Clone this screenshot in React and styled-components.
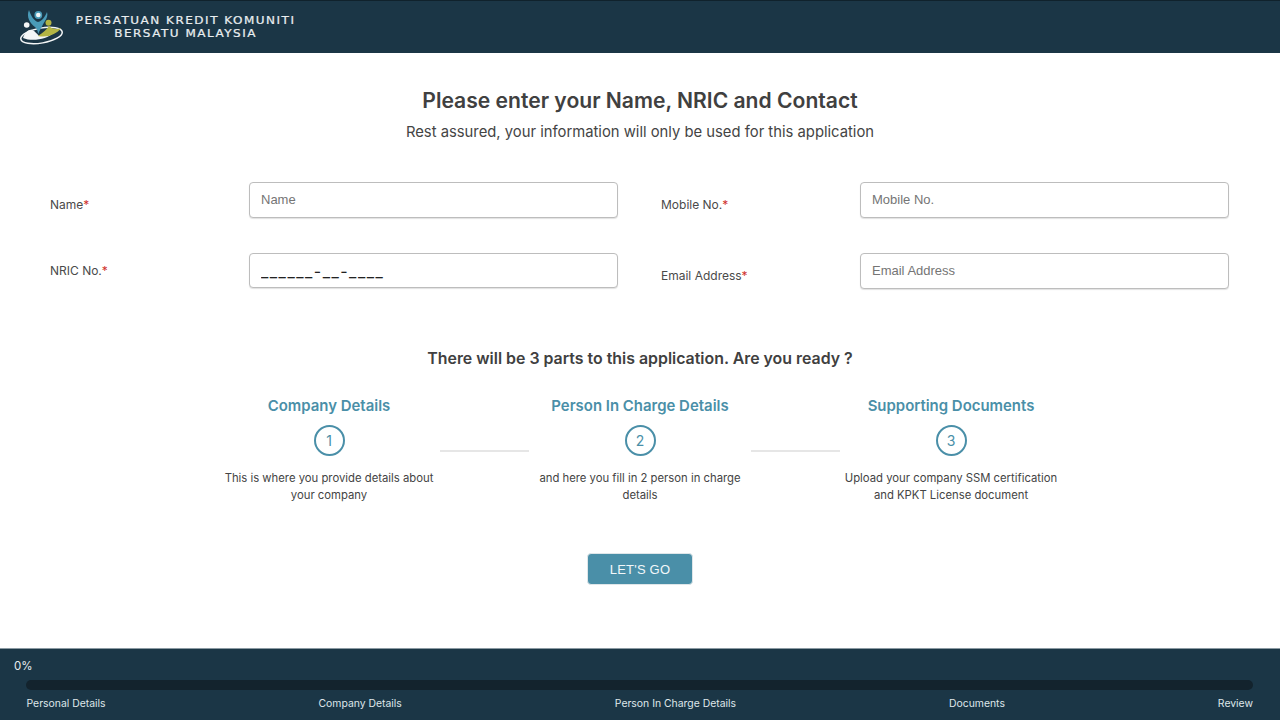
import React from "react";
import styled, { createGlobalStyle } from "styled-components";

const Global = createGlobalStyle`
  html, body { margin: 0; padding: 0; background: #fff; }
  * { box-sizing: border-box; }
`;
const Page = styled.div`
  width: 1280px; height: 720px; display: flex; flex-direction: column; overflow: hidden;
  font-family: Inter, "Noto Sans", sans-serif; color: #3f3f3f; background: #fff;
`;
const Header = styled.header`
  height: 53px; flex: none; background: #1b3646; border-top: 1px solid #10222c;
  display: flex; align-items: center; padding: 0 0 0 20px; gap: 12px;
`;
const Brand = styled.div`
  width: 220px; display: flex; justify-content: center; margin-top: -1px;
`;
const BrandText = styled.div`
  font-family: "DejaVu Sans", sans-serif; color: #e9eef0; font-size: 10px; line-height: 13px;
  text-align: center; letter-spacing: 1.25px; font-weight: 400; white-space: nowrap; flex: none;
  transform: scaleX(1.2); -webkit-text-stroke: 0.2px #e9eef0;
`;
const Main = styled.main`
  flex: 1; display: flex; flex-direction: column; align-items: center; padding-top: 35px;
`;
const Title = styled.h1`
  margin: 0; font-size: 21.1px; line-height: 26px; font-weight: 600; color: #404040;
`;
const Sub = styled.p`
  margin: 7px 0 0; font-size: 14.8px; line-height: 22px; font-weight: 400; color: #444;
`;
const FormGrid = styled.div`
  align-self: stretch; margin: 39px 51px 0 50px; display: grid; grid-template-columns: 568px 568px;
  column-gap: 43px; row-gap: 35px;
`;
const Field = styled.div`
  display: grid; grid-template-columns: 199px 1fr; align-items: start;
`;
const Label = styled.label`
  font-family: Inter, sans-serif; font-size: 12px; line-height: 16px; color: #4a4a4a;
  padding-top: ${p => p.$top}px;
  b { color: #d0312d; font-weight: 400; }
`;
const Input = styled.input`
  width: 100%; height: ${p => p.$h || 36}px; border: 1px solid #bdbdbd; border-radius: 4px; padding: 0 11px 1px;
  font-family: "Liberation Sans", sans-serif; font-size: 13px; color: #222; background: #fff;
  box-shadow: 0 1px 1px #e2e2e2; outline: none;
  &::placeholder { color: #757575; opacity: 1; }
`;
const MaskInput = styled(Input)`
  font-family: Inter, sans-serif; font-size: 16px; letter-spacing: 1.5px; padding-top: 1px; padding-bottom: 0;
`;
const Ready = styled.h2`
  margin: 59px 0 0; font-size: 15.9px; line-height: 22px; font-weight: 600; color: #404040;
`;
const Steps = styled.div`
  margin-top: 25px; display: grid; grid-template-columns: 222px 89px 222px 89px 222px; height: 113px;
`;
const Step = styled.div`
  display: flex; flex-direction: column; align-items: center; text-align: center;
`;
const StepTitle = styled.h3`
  margin: 0; font-size: 14.95px; line-height: 22px; font-weight: 600; color: #4a8fa8; white-space: nowrap;
`;
const Circle = styled.div`
  margin-top: 8px; width: 31px; height: 31px; border-radius: 50%; border: 2px solid #4a8fa8; color: #4a8fa8;
  display: flex; align-items: center; justify-content: center; font-size: 14px; line-height: 1;
`;
const StepText = styled.p`
  margin: 14px 0 0; font-size: 11.3px; line-height: 17px; color: #444;
`;
const Connector = styled.div`
  height: 2px; background: #e6e6e6; margin-top: 55px;
`;
const Go = styled.button`
  margin-top: 45px; width: 106px; height: 32px; background: #4a8fa8; color: #f2f7f9; border: 1px solid #dfe6e9; border-radius: 4px;
  font-family: "Liberation Sans", sans-serif; font-size: 13px; letter-spacing: 0.2px; padding: 0;
`;
const Footer = styled.footer`
  height: 72px; flex: none; background: #1b3646; border-top: 1px solid #8b9aa3; color: #e6ecef;
  padding: 10px 27px 0 14px; display: flex; flex-direction: column;
`;
const Percent = styled.div`
  font-size: 11.5px; line-height: 14px;
`;
const Track = styled.div`
  margin: 7px 0 0 12px; height: 10px; background: #13232d; border-radius: 5px;
`;
const Stops = styled.div`
  margin: 6.5px 0 0 12.5px; display: flex; justify-content: space-between;
  font-size: 10.4px; line-height: 14px; color: #dfe6ea;
`;

const Logo = () => (
  <svg width="44" height="36" viewBox="0 0 44 36" fill="none" style={{ flex: "none" }}>
    <ellipse cx="21.5" cy="26.5" rx="21" ry="7.5" transform="rotate(-10 21.5 26.5)" stroke="#f4f6f7" strokeWidth="1.5" />
    <path d="M3 29 C5 23 9 20 12 21 C15 22 17 25 19 27 C24 24 28 23 33 24 C28 30 12 33 3 29Z" fill="#f4f6f7" />
    <path d="M18 27 C23 24 27 20 29 17 C32 20 36 21 41 19 C37 25 28 29 18 27Z" fill="#b3b544" />
    <circle cx="28.5" cy="13.7" r="3" fill="#b3b544" />
    <path d="M9 1 C6 8 10 14 15 18 C17 20 18 22 18 25 C20 21 22 17 25 12 C27 9 28 6 27 3 C25 8 22 12 18 13 C14 12 11 7 9 1Z" fill="#4a9bb8" />
    <circle cx="18.3" cy="6" r="3.1" stroke="#4a9bb8" strokeWidth="1.6" fill="#f4f6f7" />
    <circle cx="6.7" cy="16" r="2.8" fill="#f4f6f7" />
  </svg>
);

const steps = [
  ["Company Details", "1", <>This is where you provide details about<br />your company</>],
  ["Person In Charge Details", "2", <>and here you fill in 2 person in charge<br />details</>],
  ["Supporting Documents", "3", <>Upload your company SSM certification<br />and KPKT License document</>],
];

export default function App() {
  return (
    <Page>
      <Global />
      <Header>
        <Logo />
        <Brand><BrandText>PERSATUAN KREDIT KOMUNITI<br />BERSATU MALAYSIA</BrandText></Brand>
      </Header>
      <Main>
        <Title>Please enter your Name, NRIC and Contact</Title>
        <Sub>Rest assured, your information will only be used for this application</Sub>
        <FormGrid>
          <Field><Label $top={15}>Name<b>*</b></Label><Input placeholder="Name" /></Field>
          <Field><Label $top={15}>Mobile No.<b>*</b></Label><Input placeholder="Mobile No." /></Field>
          <Field><Label $top={10}>NRIC No.<b>*</b></Label><MaskInput $h={35} readOnly value="______-__-____" /></Field>
          <Field><Label $top={15}>Email Address<b>*</b></Label><Input placeholder="Email Address" /></Field>
        </FormGrid>
        <Ready>There will be 3 parts to this application. Are you ready ?</Ready>
        <Steps>
          {steps.map(([t, n, d], i) => (
            <React.Fragment key={n}>
              <Step>
                <StepTitle>{t}</StepTitle>
                <Circle>{n}</Circle>
                <StepText>{d}</StepText>
              </Step>
              {i < 2 && <Connector />}
            </React.Fragment>
          ))}
        </Steps>
        <Go>LET'S GO</Go>
      </Main>
      <Footer>
        <Percent>0%</Percent>
        <Track />
        <Stops>
          <span>Personal Details</span>
          <span>Company Details</span>
          <span>Person In Charge Details</span>
          <span>Documents</span>
          <span>Review</span>
        </Stops>
      </Footer>
    </Page>
  );
}
